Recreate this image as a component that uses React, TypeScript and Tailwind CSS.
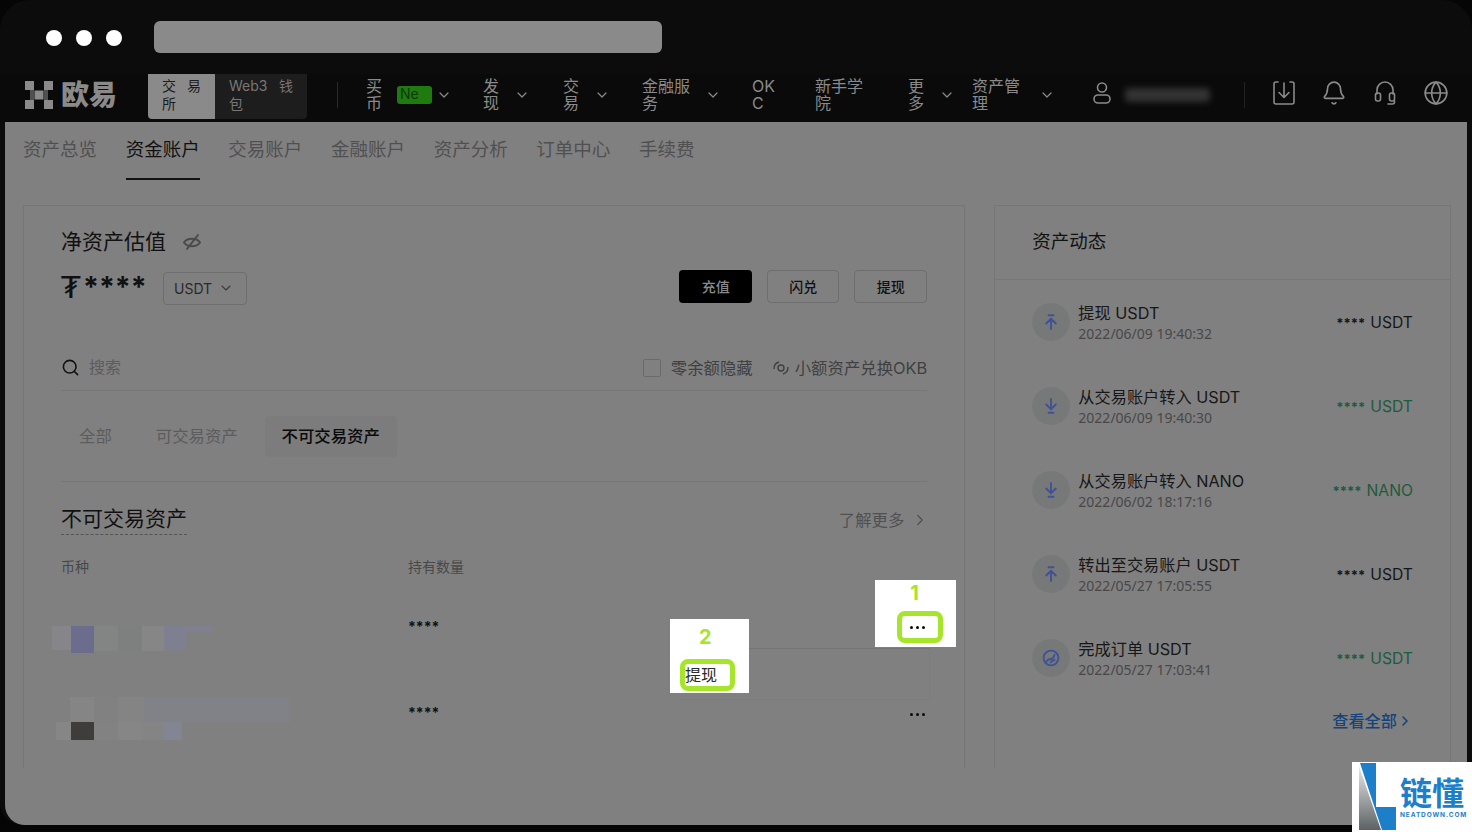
import { Bell, ChevronDown, ChevronRight, Globe, Search } from "lucide-react";

const navItems = [
  { label: "发现", textW: "w-[17px]", ml: "ml-[31px]", chevron: true },
  { label: "交易", textW: "w-[17px]", ml: "ml-[33px]", chevron: true },
  { label: "金融服务", textW: "w-[49px]", ml: "ml-[32px]", chevron: true },
  { label: "OKC", textW: "w-[25px]", ml: "ml-[31px]", chevron: false },
  { label: "新手学院", textW: "w-[50px]", ml: "ml-[38px]", chevron: false },
  { label: "更多", textW: "w-[17px]", ml: "ml-[43px]", chevron: true },
];

const tabs = ["资产总览", "资金账户", "交易账户", "金融账户", "资产分析", "订单中心", "手续费"];

const activity = [
  { title: "提现 USDT", date: "2022/06/09 19:40:32", amount: "USDT", kind: "up", green: false },
  { title: "从交易账户转入 USDT", date: "2022/06/09 19:40:30", amount: "USDT", kind: "down", green: true },
  { title: "从交易账户转入 NANO", date: "2022/06/02 18:17:16", amount: "NANO", kind: "down", green: true },
  { title: "转出至交易账户 USDT", date: "2022/05/27 17:05:55", amount: "USDT", kind: "up", green: false },
  { title: "完成订单 USDT", date: "2022/05/27 17:03:41", amount: "USDT", kind: "order", green: true },
];

function Logo() {
  return (
    <svg width="28" height="28" viewBox="0 0 28 28" fill="#8a8a8a">
      <rect x="0" y="0" width="9" height="9" />
      <rect x="19" y="0" width="9" height="9" />
      <rect x="9.5" y="9.5" width="9" height="9" />
      <rect x="0" y="19" width="9" height="9" />
      <rect x="19" y="19" width="9" height="9" />
      <rect x="5" y="9" width="4" height="10" opacity="0.55" />
      <rect x="19" y="9" width="4" height="10" opacity="0.55" />
    </svg>
  );
}

function ActivityIcon({ kind }: { kind: string }) {
  return (
    <div className="flex h-[38px] w-[38px] shrink-0 items-center justify-center rounded-full bg-[#777979]">
      <svg width="20" height="20" viewBox="0 0 20 20" fill="none" stroke="#3f5296" strokeWidth="1.9" strokeLinecap="round" strokeLinejoin="round">
        {kind === "up" && <path d="M7.5 3.2h5M10 17V7M5.2 11.5 10 6.8l4.8 4.7" />}
        {kind === "down" && <path d="M7.5 16.8h5M10 3v10M5.2 8.5 10 13.2l4.8-4.7" />}
        {kind === "order" && (
          <>
            <circle cx="10" cy="10" r="7.4" />
            <path d="M5.5 13.5c1.5-2.5 3-2.5 4.5-2.5s2.5-1 3.5-4M9.5 14.5c1-1.5 2-2 4-2.5" />
          </>
        )}
      </svg>
    </div>
  );
}

function Dots() {
  return (
    <div className="flex gap-[3px]">
      <span className="h-[3px] w-[3px] rounded-full bg-[#0a0a0a]" />
      <span className="h-[3px] w-[3px] rounded-full bg-[#0a0a0a]" />
      <span className="h-[3px] w-[3px] rounded-full bg-[#0a0a0a]" />
    </div>
  );
}

function MosaicOne() {
  return (
    <div className="flex h-[27px] items-start blur-[0.6px]">
      <div className="h-[24px] w-[19px] bg-[#85858a]" />
      <div className="h-[27px] w-[23px] bg-[#6c6c8d]" />
      <div className="h-[25px] w-[24px] bg-[#838484]" />
      <div className="h-[25px] w-[24px] bg-[#7e8080]" />
      <div className="h-[25px] w-[22px] bg-[#858685]" />
      <div className="h-[24px] w-[22px] bg-[#7e8092]" />
      <div className="h-[6px] w-[26px] bg-[#808090]" />
    </div>
  );
}

function MosaicTwo() {
  return (
    <div className="flex flex-col blur-[0.6px]">
      <div className="ml-[14px] flex h-[25px]">
        <div className="w-[24px] bg-[#858585]" />
        <div className="w-[24px] bg-[#818181]" />
        <div className="w-[26px] bg-[#848484]" />
        <div className="w-[146px] bg-[#808288]" />
      </div>
      <div className="flex h-[18px]">
        <div className="w-[15px] bg-[#868686]" />
        <div className="w-[23px] bg-[#3f3d3a]" />
        <div className="w-[24px] bg-[#828282]" />
        <div className="w-[24px] bg-[#868686]" />
        <div className="w-[22px] bg-[#848484]" />
        <div className="w-[18px] bg-[#828592]" />
      </div>
    </div>
  );
}

export default function App() {
  return (
    <div className="relative h-[832px] w-[1472px] overflow-hidden bg-[#050505] font-['Inter','Noto_Sans_CJK_SC',sans-serif]">
      <div className="flex h-[825px] flex-col overflow-hidden rounded-t-[30px] rounded-b-[22px] bg-[#0c0c0c]">
        {/* title bar */}
        <div className="flex h-[74px] shrink-0 items-start pl-[46px] pt-[21px]">
          <div className="mt-[9px] flex gap-[14px]">
            <span className="h-4 w-4 rounded-full bg-white" />
            <span className="h-4 w-4 rounded-full bg-white" />
            <span className="h-4 w-4 rounded-full bg-white" />
          </div>
          <div className="ml-[32px] h-[32px] w-[508px] rounded-[6px] bg-[#8a8a8a]" />
        </div>

        {/* nav */}
        <div className="flex h-[48px] shrink-0 items-center bg-[#0a0a0a] pb-[7px] text-[16px] leading-[16.5px] text-[#8a8a8a]">
          <div className="ml-[25px] flex w-[92px] items-center justify-between">
            <Logo />
            <span className="text-[28px] leading-none font-black text-[#8a8a8a]">欧易</span>
          </div>
          <div className="ml-[31px] flex h-[45px] w-[159px] self-start overflow-hidden rounded-b-[4px] text-[14px] leading-[18px]">
            <div className="w-[67px] bg-[#8a8a8a] px-[14px] pt-[3px] text-[#1c1c1c]">
              <div className="flex justify-between"><span>交</span><span>易</span></div>
              <div>所</div>
            </div>
            <div className="flex-1 bg-[#1d1d1d] px-[14px] pt-[3px] text-[#777777]">
              <div className="flex justify-between"><span>Web3</span><span>钱</span></div>
              <div>包</div>
            </div>
          </div>
          <div className="ml-[30px] h-[26px] w-px bg-[#2a2a2a]" />
          <div className="ml-[28px] w-[17px] break-all">买币</div>
          <span className="ml-[14px] flex h-[18px] w-[35px] items-center rounded-[3px] bg-[#1f7a10] pl-[3px] text-[14px] text-[#0d3b08]">Ne</span>
          <ChevronDown className="ml-[4px] h-[16px] w-[16px] text-[#8a8a8a]" strokeWidth={1.8} />
          {navItems.map((item) => (
            <div key={item.label} className={`flex items-center ${item.ml}`}>
              <div className={`${item.textW} break-all`}>{item.label}</div>
              {item.chevron && <ChevronDown className="ml-[14px] h-[16px] w-[16px] text-[#8a8a8a]" strokeWidth={1.8} />}
            </div>
          ))}
          <div className="ml-[17px] w-[50px] break-all">资产管理</div>
          <ChevronDown className="ml-[17px] h-[16px] w-[16px] text-[#8a8a8a]" strokeWidth={1.8} />
          <svg className="mb-[3px] ml-[36px]" width="22" height="24" viewBox="0 0 22 24" fill="none" stroke="#8a8a8a" strokeWidth="1.6">
            <circle cx="11" cy="6.5" r="4.5" />
            <rect x="3" y="14" width="16" height="8" rx="4" />
          </svg>
          <div className="ml-[12px] h-[14px] w-[85px] rounded-sm bg-[#333333] blur-[3px]" />
          <div className="ml-[34px] h-[26px] w-px bg-[#222222]" />
          <svg className="mb-[3px] ml-[27px]" width="24" height="26" viewBox="0 0 24 26" fill="none" stroke="#8a8a8a" strokeWidth="1.6" strokeLinecap="round" strokeLinejoin="round">
            <path d="M6 2H4a2 2 0 0 0-2 2v18a2 2 0 0 0 2 2h16a2 2 0 0 0 2-2V4a2 2 0 0 0-2-2h-2M12 3v14M7 12.5l5 5 5-5" />
          </svg>
          <Bell className="mb-[3px] ml-[25px] h-[26px] w-[26px] text-[#8a8a8a]" strokeWidth={1.5} />
          <svg className="mb-[3px] ml-[26px]" width="24" height="26" viewBox="0 0 24 26" fill="none" stroke="#8a8a8a" strokeWidth="1.6" strokeLinecap="round" strokeLinejoin="round">
            <path d="M4 14V10a8 8 0 0 1 16 0v4" />
            <rect x="2.500" y="13" width="5" height="8" rx="2" />
            <rect x="16.500" y="13" width="5" height="8" rx="2" />
            <path d="M21.500 21v1a2 2 0 0 1-2 2H15" />
          </svg>
          <Globe className="mb-[3px] ml-[26px] h-[26px] w-[26px] text-[#8a8a8a]" strokeWidth={1.5} />
        </div>

        {/* page */}
        <div className="mx-[5px] flex-1 rounded-b-[20px] bg-[#808080] pl-[18px] pr-[16px]">
          <div className="flex h-[58px] gap-[28.67px]">
            {tabs.map((t, i) => (
              <div
                key={t}
                className={`h-[58px] text-[18.5px] leading-[54px] ${i === 1 ? "w-[74px] border-b-2 border-[#111111] text-[#111111]" : "text-[#505050]"}`}
              >
                {t}
              </div>
            ))}
          </div>

          <div className="mt-[25px] flex gap-[29px]">
            {/* left card */}
            <div className="h-[563px] w-[943px] border border-b-0 border-[#767676] px-[37px] pt-[22px]">
              <div className="flex h-[28px] items-center">
                <span className="text-[21px] text-[#111111]">净资产估值</span>
                <svg className="ml-[16px]" width="20" height="20" viewBox="0 0 20 20" fill="none" stroke="#4a4a4a" strokeWidth="2" strokeLinecap="round">
                  <path d="M2 10.500c3.500-5 12.500-5 16 0-3.500 5-12.500 5-16 0Z" />
                  <path d="M16 3 5 17M12 8l-4 5" />
                </svg>
              </div>
              <div className="mt-[14px] flex h-[34px] items-center">
                <span className="flex w-[102px] items-start text-[#111111]">
                  <span className="w-[22px] font-['DejaVu_Sans',sans-serif] text-[31px] leading-[34px] font-normal">₮</span>
                  <span className="text-[28.5px] leading-[34px] font-bold">****</span>
                </span>
                <div className="mt-[2px] flex h-[33px] w-[84px] items-center rounded-[4px] border border-[#6e6e6e] pl-[10px] text-[14px] text-[#2a2a2a]">
                  USDT
                  <ChevronDown className="ml-[6px] h-[16px] w-[16px] text-[#3a3a3a]" strokeWidth={1.6} />
                </div>
                <div className="mb-[2px] ml-auto flex gap-[15px] text-[14px] font-medium">
                  <div className="flex h-[33px] w-[73px] items-center justify-center rounded-[4px] bg-black text-[#8a8a8a]">充值</div>
                  <div className="flex h-[33px] w-[72px] items-center justify-center rounded-[4px] border border-[#6e6e6e] text-[#111111]">闪兑</div>
                  <div className="flex h-[33px] w-[73px] items-center justify-center rounded-[4px] border border-[#6e6e6e] text-[#111111]">提现</div>
                </div>
              </div>
              <div className="mt-[46px] flex h-[41px] items-center border-b border-[#767676] pb-[6px]">
                <Search className="h-[19px] w-[19px] text-[#111111]" strokeWidth={2} />
                <span className="ml-[9px] text-[16px] text-[#5c5c5c]">搜索</span>
                <div className="ml-auto flex items-center pt-[3px] text-[16.4px] text-[#404040]">
                  <span className="h-[18px] w-[18px] rounded-[2px] border border-[#6a6a6a]" />
                  <span className="ml-[10px]">零余额隐藏</span>
                  <svg className="ml-[19px]" width="18" height="18" viewBox="0 0 18 18" fill="none" stroke="#404040" strokeWidth="1.4">
                    <circle cx="9" cy="9" r="3" />
                    <path d="M2 10a7 7 0 0 1 5-7M16 8a7 7 0 0 1-5 7" />
                  </svg>
                  <span className="ml-[5px]">小额资产兑换OKB</span>
                </div>
              </div>
              <div className="mt-[25px] flex h-[41px] items-center text-[16.4px]">
                <span className="ml-[18px] text-[#5c5c5c]">全部</span>
                <span className="ml-[44px] text-[#5c5c5c]">可交易资产</span>
                <span className="ml-[27px] flex h-[41px] w-[132px] items-center justify-center rounded-[4px] bg-[#7c7c7c] font-medium text-[#0a0a0a]">不可交易资产</span>
              </div>
              <div className="mt-[24px] border-b border-[#767676]" />
              <div className="mt-[22px] flex h-[31px] items-start justify-between">
                <span className="border-b border-dashed border-[#555555] pb-[1px] text-[21px] leading-[29px] text-[#111111]">不可交易资产</span>
                <span className="mt-[4px] -mr-[2px] flex items-center text-[16.4px] leading-[24px] text-[#505050]">
                  了解更多
                  <ChevronRight className="ml-[7px] h-[18px] w-[18px]" strokeWidth={1.6} />
                </span>
              </div>
              <div className="mt-[21px] flex h-[20px] items-center text-[14px] text-[#484848]">
                <span className="w-[347px]">币种</span>
                <span>持有数量</span>
              </div>
              <div className="flex h-[86px] items-start">
                <div className="-ml-[9px] mt-[50px] w-[356px]"><MosaicOne /></div>
                <span className="mt-[40px] flex-1 text-[14px] font-bold text-[#111111]">****</span>
              </div>
              <div className="flex h-[86px] items-start">
                <div className="-ml-[5px] mt-[35px] w-[352px]"><MosaicTwo /></div>
                <span className="mt-[40px] flex-1 text-[14px] font-bold text-[#111111]">****</span>
                <div className="mt-[51px] mr-[2px]"><Dots /></div>
              </div>
            </div>

            {/* right card */}
            <div className="h-[563px] w-[457px] border border-b-0 border-[#767676]">
              <div className="flex h-[74px] items-center border-b border-[#767676] pb-[2px] pl-[37px] text-[18.5px] text-[#111111]">资产动态</div>
              <div className="pl-[37px] pr-[37px]">
                {activity.map((a) => (
                  <div key={a.title + a.date} className="flex h-[84px] items-center">
                    <ActivityIcon kind={a.kind} />
                    <div className="ml-[8px] flex flex-col pt-[2px]">
                      <span className="text-[16.2px] leading-[21px] text-[#171717]">{a.title}</span>
                      <span className="font-['Noto_Sans',sans-serif] text-[14px] leading-[20px] text-[#484848]">{a.date}</span>
                    </div>
                    <span className={`ml-auto pt-[2px] text-[15.7px] ${a.green ? "text-[#225a3c]" : "text-[#171717]"}`}>
                      <span className="mr-[5px] text-[13px] font-bold">****</span>
                      {a.amount}
                    </span>
                  </div>
                ))}
                <div className="mt-[9px] flex items-center justify-end text-[16.2px] font-medium text-[#16437d]">
                  查看全部
                  <ChevronRight className="h-[16px] w-[16px]" strokeWidth={2.4} />
                </div>
              </div>
            </div>
          </div>
        </div>
      </div>

      {/* dropdown behind annotation 2 */}
      <div className="absolute left-[680px] top-[648px] h-[52px] w-[250px] border border-l-0 border-[#7d7d7d] border-t-[#747474]" />

      {/* annotation 1 */}
      <div className="absolute left-[875px] top-[580px] flex h-[67px] w-[81px] flex-col items-center bg-white">
        <span className="ml-[-2px] text-[20px] leading-[26px] font-bold text-[#a6e52a]">1</span>
        <div className="ml-[9px] mt-[5px] flex h-[32px] w-[46px] items-center justify-center rounded-[8px] border-[5px] border-[#a6e52a] pr-[6px]">
          <Dots />
        </div>
      </div>

      {/* annotation 2 */}
      <div className="absolute left-[670px] top-[619px] flex h-[74px] w-[79px] flex-col bg-white">
        <span className="ml-[29px] text-[20px] leading-[36px] font-bold text-[#a6e52a]">2</span>
        <div className="ml-[10px] mt-[4px] flex h-[32px] w-[55px] items-center rounded-[8px] border-[5px] border-[#a6e52a] text-[16px] text-[#2a2a2a]">
          提现
        </div>
      </div>

      {/* watermark */}
      <div className="absolute left-[1352px] top-[762px] flex h-[70px] w-[120px] bg-white">
        <svg className="ml-[7px] mt-[1px]" width="37" height="67" viewBox="0 0 37 67">
          <defs>
            <linearGradient id="lg" x1="0" y1="0" x2="0" y2="1">
              <stop offset="0" stopColor="#e8e8e8" />
              <stop offset="1" stopColor="#5c6264" />
            </linearGradient>
          </defs>
          <path d="M0 3V67H22Z" fill="url(#lg)" />
          <path d="M1 0H17V44H37V67H23Z" fill="#1d7fca" />
        </svg>
        <div className="ml-[4px] mt-[13px] flex flex-col items-start">
          <span className="font-['Noto_Sans_CJK_SC',sans-serif] text-[32px] leading-[32px] font-bold text-[#1d7fca]">链懂</span>
          <span className="mt-[5px] text-[6.5px] leading-[6px] font-bold tracking-[0.9px] text-[#1d7fca]">NEATDOWN.COM</span>
        </div>
      </div>
    </div>
  );
}
